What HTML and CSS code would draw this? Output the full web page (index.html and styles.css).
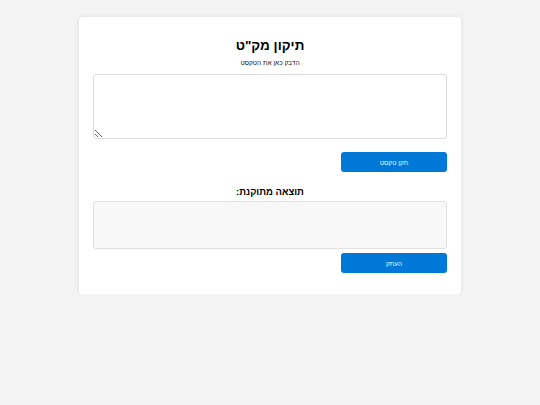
FILE: index.html
```html
<!DOCTYPE html>
<html lang="he" dir="rtl">
<head>
<meta charset="utf-8">
<title>תיקון מק"ט</title>
<link rel="stylesheet" href="styles.css">
</head>
<body>
<main class="card">
  <h1 class="title">תיקון מק"ט</h1>
  <p class="subtitle">הדבק כאן את הטקסט</p>
  <textarea class="input"></textarea>
  <div class="actions actions-fix">
    <button class="btn">תקן טקסט</button>
  </div>
  <h2 class="result-title">תוצאה מתוקנת:</h2>
  <div class="result"></div>
  <div class="actions actions-copy">
    <button class="btn">העתק</button>
  </div>
</main>
</body>
</html>
```

FILE: styles.css
```css
html, body {
  margin: 0;
  padding: 0;
  background: #f3f3f3;
}
body {
  font-family: "Liberation Sans", "DejaVu Sans", Arial, sans-serif;
  color: #222;
  padding-top: 17px;
}
.card {
  box-sizing: border-box;
  width: 382px;
  margin: 0 auto;
  background: #fff;
  border-radius: 4px;
  box-shadow: 0 0 4px rgba(0,0,0,0.10);
  padding: 20px 14px 21px;
  display: flex;
  flex-direction: column;
}
.title {
  margin: 0;
  font-size: 13.5px;
  line-height: 18px;
  font-weight: bold;
  text-align: center;
  color: #000;
}
.subtitle {
  margin: 3px 0 0;
  font-size: 6.5px;
  line-height: 10px;
  text-align: center;
  color: #111;
}
.input {
  box-sizing: border-box;
  margin: 6px 0 0;
  width: 100%;
  height: 65px;
  border: 1px solid #dcdcdc;
  border-radius: 3px;
  background: #fff;
  resize: vertical;
  font: inherit;
}
.actions {
  display: flex;
  justify-content: flex-start;
}
.actions-fix { margin-top: 13px; }
.actions-copy { margin-top: 4px; }
.btn {
  width: 106px;
  height: 20px;
  border: none;
  border-radius: 3px;
  background: #0078d7;
  color: #f2f6fb;
  font-family: inherit;
  font-size: 6.5px;
  font-weight: normal;
  padding: 0;
  cursor: pointer;
}
.result-title {
  margin: 13px 0 0;
  font-size: 9.5px;
  line-height: 13px;
  font-weight: bold;
  text-align: center;
  color: #000;
}
.result {
  box-sizing: border-box;
  margin-top: 3px;
  height: 48px;
  border: 1px solid #e0e0e0;
  border-radius: 3px;
  background: #f8f8f8;
}
```
